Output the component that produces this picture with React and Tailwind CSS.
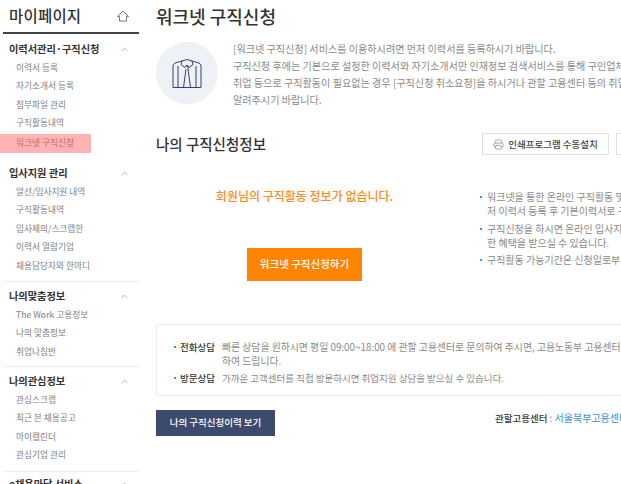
import { Printer, ChevronUp } from 'lucide-react'

const MENU = [
  { title: '이력서관리·구직신청', items: ['이력서 등록', '자기소개서 등록', '첨부파일 관리', '구직활동내역', '워크넷 구직신청'] },
  { title: '입사지원 관리', items: ['알선/입사지원 내역', '구직활동내역', '입사제의/스크랩한', '이력서 열람기업', '채용담당자와 한마디'] },
  { title: '나의맞춤정보', items: ['The Work 고용정보', '나의 맞춤정보', '취업나침반'] },
  { title: '나의관심정보', items: ['관심스크랩', '최근 본 채용공고', '마이캘린더', '관심기업 관리'] },
  { title: 'e채용마당 서비스', items: [] },
]

function ShirtIcon() {
  return (
    <svg width="30" height="31" viewBox="0 0 30 31" fill="none" stroke="#33426b" strokeWidth="1" strokeLinejoin="round">
      <path d="M10 3 L3 5 L1 7 V29.5 H29 V7 L27 5 L20 3" />
      <path d="M6 8 V29.5 M24 8 V29.5" />
      <path d="M10 3 L15 1.5 L20 3 L21 6.5 L17 9.5 L15 7 L13 9.5 L9 6.5 Z" />
      <path d="M13.7 8 L16.3 8 L16 11 L18.5 29.5 M14 11 L11.5 29.5" />
    </svg>
  )
}

function HomeIcon() {
  return (
    <svg width="12" height="12" viewBox="0 0 12 12" fill="none" stroke="#777" strokeWidth="1" strokeLinejoin="round">
      <path d="M6 1 L11.5 6.5 H9.5 V11 H2.5 V6.5 H0.5 Z" />
    </svg>
  )
}

function Sidebar() {
  return (
    <aside className="w-[139px] shrink-0 pl-[3px]">
      <div className="h-[34px] border-b-2 border-[#444] flex items-center justify-between pl-[6px] pr-[10px]">
        <span className="text-[15.5px] font-medium leading-none text-[#333] tracking-[0.2px]">마이페이지</span>
        <HomeIcon />
      </div>
      {MENU.map((section, i) => (
        <div key={section.title} className={`${i === 0 ? 'pt-[6px]' : ''} ${i === 1 ? 'pt-[11px]' : ''} ${i === 2 ? 'border-t border-[#eeeeee] mt-[5.5px] pt-[5px]' : ''} ${i === 3 ? 'border-t border-[#eeeeee] mt-[4.5px] pt-[5px]' : ''} ${i === 4 ? 'border-t border-[#eeeeee] mt-[5.5px] pt-[4px]' : ''}`}>
          <div className="h-[18px] flex items-center justify-between pl-[6px] pr-[9px]">
            <span className="text-[10.2px] font-semibold text-[#333] leading-none">{section.title}</span>
            <ChevronUp size={11} color="#999" strokeWidth={1.5} />
          </div>
          <ul className="pt-[1px]">
            {section.items.map((item) => {
              const active = item === '워크넷 구직신청'
              return (
                <li
                  key={item}
                  className={`flex items-center text-[8.7px] leading-none ${active ? 'h-[19px] w-[91px] -ml-[3px] pl-[16px] bg-[#ffb3b3] text-[#c06a6a] mt-[1px]' : 'h-[18.5px] pl-[13px] text-[#808080]'}`}
                >
                  {item}
                </li>
              )
            })}
          </ul>
        </div>
      ))}
    </aside>
  )
}

export default function App() {
  return (
    <div className="w-[621px] h-[484px] overflow-hidden bg-white flex font-['Noto_Sans_CJK_KR','Noto_Sans',sans-serif]">
      <Sidebar />
      <main className="w-[700px] shrink-0 pl-[17px] whitespace-nowrap">
        <h1 className="h-[32px] flex items-center text-[18px] font-medium text-[#333] leading-none">워크넷 구직신청</h1>

        <section className="flex mt-[10px] h-[62px]">
          <div className="w-[62px] h-[62px] rounded-full bg-[#eef1f5] flex items-center justify-center">
            <ShirtIcon />
          </div>
          <div className="ml-[15px] -mt-[2px] text-[10.1px] leading-[17px] text-[#8a8a8a]">
            <p>[워크넷 구직신청] 서비스를 이용하시려면 먼저 이력서를 등록하시기 바랍니다.</p>
            <p>구직신청 후에는 기본으로 설정한 이력서와 자기소개서만 인재정보 검색서비스를 통해 구인업체에 제공됩니다.</p>
            <p>취업 등으로 구직활동이 필요없는 경우 [구직신청 취소요청]을 하시거나 관할 고용센터 등의 취업지원 담당자에게</p>
            <p>알려주시기 바랍니다.</p>
          </div>
        </section>

        <section className="flex items-center mt-[29px] h-[22px]">
          <h2 className="w-[326px] pt-[1px] text-[14.5px] font-medium text-[#333] leading-none">나의 구직신청정보</h2>
          <button className="w-[127px] h-[22px] border border-[#e2e2e2] flex items-center justify-center gap-[4px] text-[9.5px] font-medium text-[#444]">
            <Printer size={11} color="#888" strokeWidth={1.5} />
            인쇄프로그램 수동설치
          </button>
          <button className="w-[80px] h-[22px] border border-[#e2e2e2] ml-[7px]" />
        </section>

        <section className="flex mt-[30px] h-[126px]">
          <div className="w-[324px] pr-[27px] pt-[1px] flex flex-col items-center">
            <p className="h-[20px] flex items-center text-[12px] font-medium text-[#fb8c1e] leading-none">회원님의 구직활동 정보가 없습니다.</p>
            <button className="mt-[42px] w-[115px] h-[33px] bg-[#ff8400] text-white text-[10.5px] font-medium leading-none">워크넷 구직신청하기</button>
          </div>
          <ul className="text-[10px] leading-[14px] text-[#8a8a8a] pt-[5px]">
            <li className="relative pl-[7px] before:absolute before:left-0 before:top-[6px] before:w-[2px] before:h-[2px] before:bg-[#2a9fd6]">
              워크넷을 통한 온라인 구직활동 및 고용센터 취업지원 서비스를 받으시려면<br />저 이력서 등록 후 기본이력서로 구직신청을 하셔야 합니다.
            </li>
            <li className="relative pl-[7px] mt-[4px] before:absolute before:left-0 before:top-[6px] before:w-[2px] before:h-[2px] before:bg-[#2a9fd6]">
              구직신청을 하시면 온라인 입사지원 및 맞춤정보 제공 등 다양<br />한 혜택을 받으실 수 있습니다.
            </li>
            <li className="relative pl-[7px] mt-[3px] before:absolute before:left-0 before:top-[6px] before:w-[2px] before:h-[2px] before:bg-[#2a9fd6]">
              구직활동 가능기간은 신청일로부터 3개월입니다.
            </li>
          </ul>
        </section>

        <section className="mt-[13px] h-[72px] border border-[#eeeeee] pl-[17px] pt-[15px] text-[9.85px] leading-[14px] text-[#8a8a8a]">
          <div className="flex">
            <span className="w-[2px] h-[2px] bg-[#2a9fd6] mt-[6px] mr-[4px]" />
            <strong className="w-[42px] text-[9.5px] font-medium text-[#333]">전화상담</strong>
            <p>빠른 상담을 원하시면 평일 09:00~18:00 에 관할 고용센터로 문의하여 주시면, 고용노동부 고용센터의 취업지원 담당자가 상담<br />하여 드립니다.</p>
          </div>
          <div className="flex mt-[3px]">
            <span className="w-[2px] h-[2px] bg-[#2a9fd6] mt-[6px] mr-[4px]" />
            <strong className="w-[42px] text-[9.5px] font-medium text-[#333]">방문상담</strong>
            <p className="text-[9.5px]">가까운 고객센터를 직접 방문하시면 취업지원 상담을 받으실 수 있습니다.</p>
          </div>
        </section>

        <section className="flex items-start mt-[14px]">
          <button className="w-[119px] h-[26px] bg-[#3c4a6e] text-white text-[9.5px] font-medium leading-none">나의 구직신청이력 보기</button>
          <p className="ml-[220px] mt-[1px] text-[9.5px] leading-[14px] font-medium text-[#333]">
            관할고용센터 <span className="text-[#3f8fd0] text-[10px] font-normal">: 서울북부고용센터</span>
          </p>
        </section>
      </main>
    </div>
  )
}
